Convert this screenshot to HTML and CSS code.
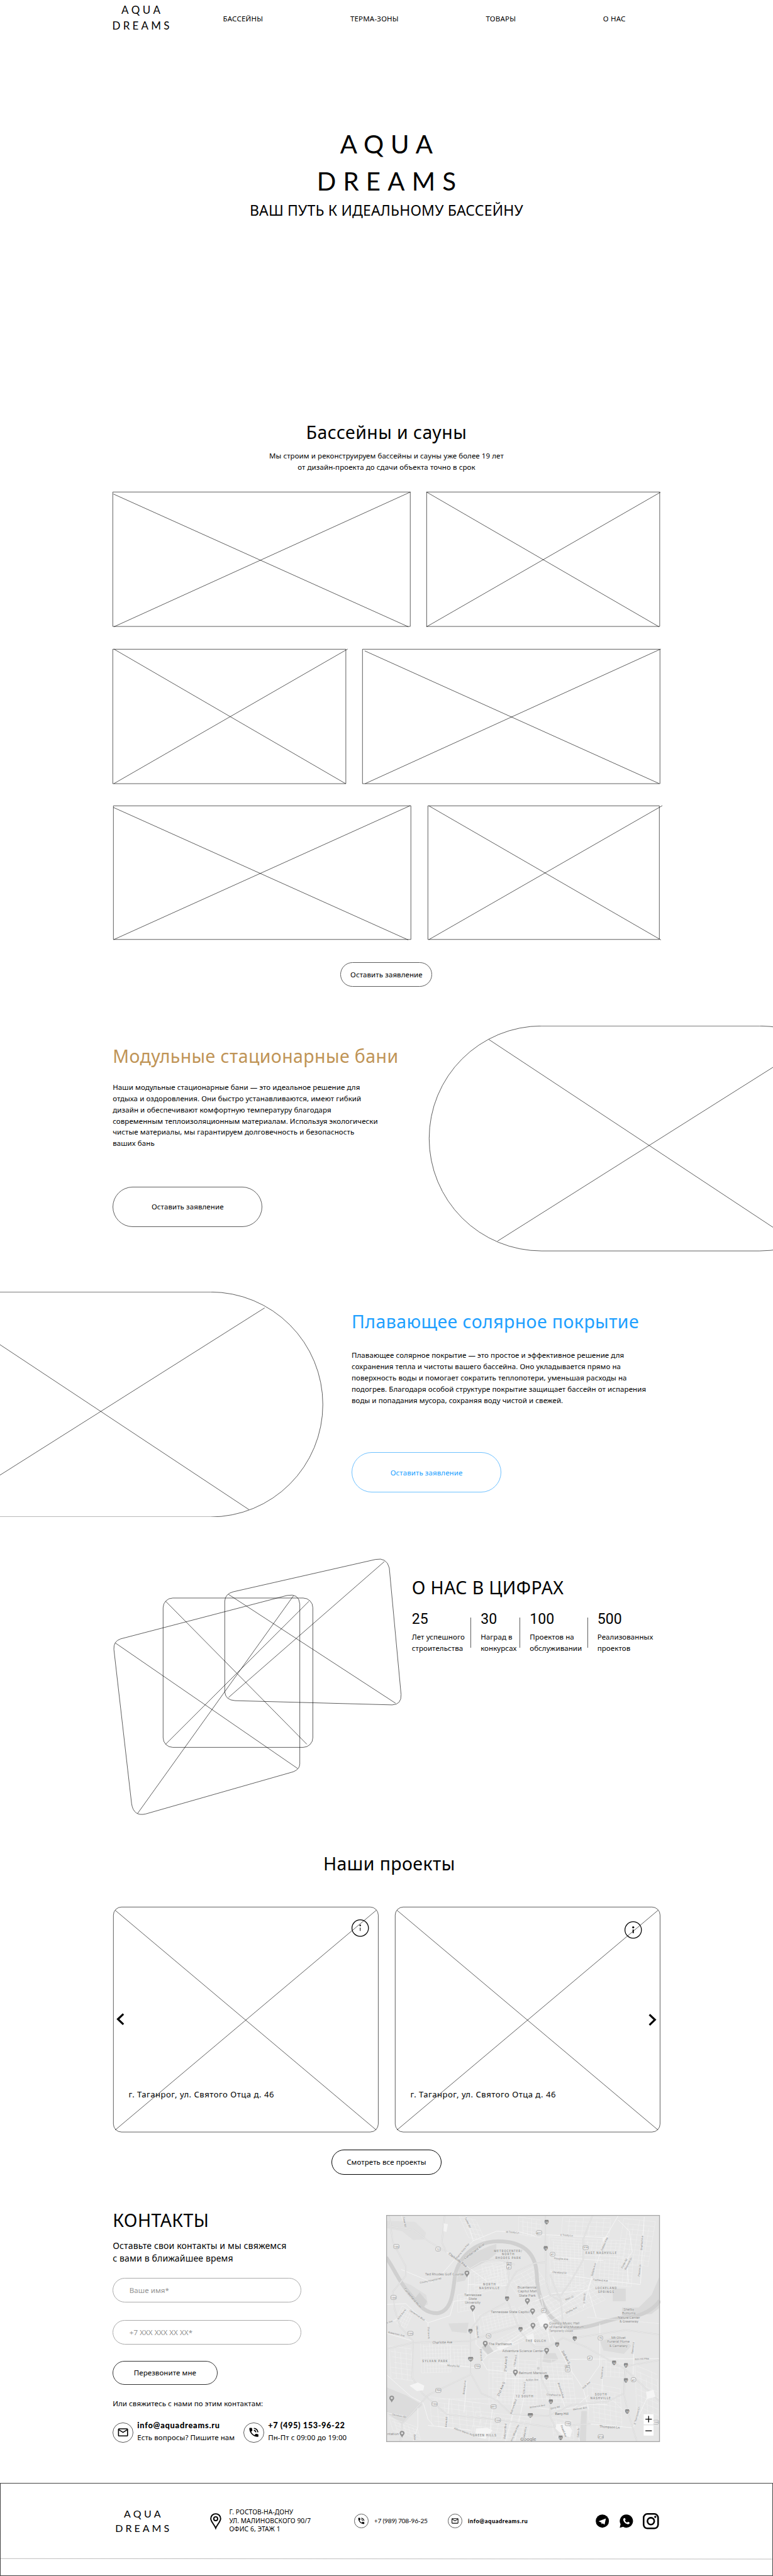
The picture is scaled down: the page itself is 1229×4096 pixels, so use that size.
FILE: index.html
```html
<!DOCTYPE html>
<html lang="ru">
<head>
<meta charset="utf-8">
<title>Aqua Dreams</title>
<link rel="stylesheet" href="styles.css">
</head>
<body>
<svg class="sprite" aria-hidden="true">
  <symbol id="i-mail" viewBox="0 0 24 24"><path d="M22 6c0-1.100-.9-2-2-2H4c-1.100 0-2 .9-2 2v12c0 1.100.9 2 2 2h16c1.100 0 2-.9 2-2V6zm-2 0l-8 5-8-5h16zm0 12H4V8l8 5 8-5v10z"/></symbol>
  <symbol id="i-call" viewBox="0 0 24 24"><path d="M20 15.500c-1.250 0-2.450-.2-3.570-.57-.35-.11-.74-.03-1.020.24l-2.200 2.200c-2.830-1.440-5.150-3.750-6.590-6.580l2.200-2.210c.28-.27.36-.66.25-1.010C8.700 6.450 8.500 5.250 8.500 4c0-.55-.45-1-1-1H4c-.55 0-1 .45-1 1 0 9.390 7.610 17 17 17 .55 0 1-.45 1-1v-3.500c0-.55-.45-1-1-1zM19 12h2c0-4.970-4.030-9-9-9v2c3.870 0 7 3.130 7 7zm-4 0h2c0-2.760-2.240-5-5-5v2c1.660 0 3 1.340 3 3z"/></symbol>
</svg>

<header class="header">
  <a class="logo logo--header"><span class="logo__a">AQUA</span><span class="logo__b">DREAMS</span></a>
  <nav class="nav"><a>БАССЕЙНЫ</a><a>ТЕРМА-ЗОНЫ</a><a>ТОВАРЫ</a><a>О НАС</a></nav>
</header>

<section class="hero">
  <h1 class="logo logo--hero"><span class="logo__a">AQUA</span><span class="logo__b">DREAMS</span></h1>
  <p class="hero__sub">ВАШ ПУТЬ К ИДЕАЛЬНОМУ БАССЕЙНУ</p>
</section>

<section class="pools">
  <h2 class="title">Бассейны и сауны</h2>
  <p class="pools__text">Мы строим и реконструируем бассейны и сауны уже более 19 лет<br>от дизайн-проекта до сдачи объекта точно в срок</p>
  <div class="gallery">
    <div class="gallery__row">
      <svg class="frame frame--wide" viewBox="0 0 740 335"><path d="M.5.5h739v334H.5zM2 5.500L735 335.500M740 .5L3 335.500"/></svg>
      <svg class="frame frame--narrow" viewBox="0 0 580 335"><path d="M.5.5h579v334H.5zM0 .5L578 335.500M581.500 1L0 335.500"/></svg>
    </div>
    <div class="gallery__row">
      <svg class="frame frame--narrow" viewBox="0 0 580 335"><path d="M.5.5h579v334H.5zM3 0L579 334.500M584 0L3 334.500"/></svg>
      <svg class="frame frame--wide" viewBox="0 0 740 335"><path d="M.5.5h739v334H.5zM6 4.500L737 334M741.500 0L7 334.500"/></svg>
    </div>
    <div class="gallery__row gallery__row--last">
      <svg class="frame frame--wide" viewBox="0 0 740 335"><path d="M.5.5h739v332H.5zM.5 4.500L733 333.700M738 0L1 333"/></svg>
      <svg class="frame frame--narrow" viewBox="0 0 580 335"><path d="M.5.5h575v332H.5zM2.700.4L579.500 333.700M583 0L2.700 333"/></svg>
    </div>
  </div>
  <a class="btn btn--small">Оставить заявление</a>
</section>

<section class="feature feature--sauna">
  <div class="feature__text">
    <h2 class="title title--gold">Модульные стационарные бани</h2>
    <p>Наши модульные стационарные бани — это идеальное решение для<br>отдыха и оздоровления. Они быстро устанавливаются, имеют гибкий<br>дизайн и обеспечивают комфортную температуру благодаря<br>современным теплоизоляционным материалам. Используя экологически<br>чистые материалы, мы гарантируем долговечность и безопасность<br>ваших бань</p>
    <a class="btn btn--big">Оставить заявление</a>
  </div>
  <svg class="pill" viewBox="0 0 855 560"><rect x=".5" y=".5" width="1100" height="559" rx="279.500"/><path d="M148.500 34L855 501M170.500 535L855 103"/></svg>
</section>

<section class="feature feature--cover">
  <svg class="pill" viewBox="0 0 803 560"><rect x="-298" y=".5" width="1100" height="559" rx="279.500"/><path d="M657.500 40L0 455.500M618.400 541.200L0 131.400"/></svg>
  <div class="feature__text">
    <h2 class="title title--blue">Плавающее солярное покрытие</h2>
    <p>Плавающее солярное покрытие — это простое и эффективное решение для<br>сохранения тепла и чистоты вашего бассейна. Оно укладывается прямо на<br>поверхность воды и помогает сократить теплопотери, уменьшая расходы на<br>подогрев. Благодаря особой структуре покрытие защищает бассейн от испарения<br>воды и попадания мусора, сохраняя воду чистой и свежей.</p>
    <a class="btn btn--big btn--blue">Оставить заявление</a>
  </div>
</section>

<section class="about">
  <svg class="about__art" viewBox="280 3869 720 645">
    <rect x="405.500" y="3970.500" width="372" height="371" rx="24"/>
    <path d="M411.700 3978.400L762.600 4333.800M768 3978.400L411.700 4333.800"/>
    <path d="M558.700 3978.400Q559.500 3960 579.800 3955L933.400 3874.600Q961 3869 967.400 3895.800L996.700 4210.300Q998 4235 974.700 4236L584.400 4225.500Q560 4224 558.700 4203.400Z"/>
    <path d="M567.900 3961.400L983 4231.900M955.400 3879.700L567.900 4217.700"/>
    <path d="M283.200 4097.800Q282 4078 299.700 4072.100L713 3964.200Q743 3958 745.100 3985.300V4382.500Q745 4396 728.600 4402.300L362.100 4507Q332 4514 327.200 4481.200Z"/>
    <path d="M286.800 4082.200L739.600 4394M729.500 3964.600L341.900 4506"/>
  </svg>
  <div class="about__text">
    <h2 class="title">О НАС В ЦИФРАХ</h2>
    <div class="stats">
      <div class="stat"><b>25</b><span>Лет успешного<br>строительства</span></div>
      <div class="stat"><b>30</b><span>Наград в<br>конкурсах</span></div>
      <div class="stat"><b>100</b><span>Проектов на<br>обслуживании</span></div>
      <div class="stat"><b>500</b><span>Реализованных<br>проектов</span></div>
    </div>
  </div>
</section>

<section class="projects">
  <h2 class="title">Наши проекты</h2>
  <div class="cards">
    <article class="card">
      <svg class="card__frame" viewBox="0 0 659 560"><rect x=".5" y=".5" width="658" height="559" rx="20"/><path d="M5 8.600L653.400 554.400M653.400 8.600L5 554.400"/></svg>
      <svg class="card__info" viewBox="0 0 46 46"><circle cx="23" cy="23" r="20.500"/><circle class="dot" cx="23" cy="16.500" r="2"/><path d="M23 22v8" stroke-width="1.600"/></svg>
      <svg class="card__arrow card__arrow--prev" viewBox="0 0 20 30"><path d="M17.500 2L4 15l13.500 13"/></svg>
      <p class="card__place">г. Таганрог, ул. Святого Отца д. 46</p>
    </article>
    <article class="card">
      <svg class="card__frame" viewBox="0 0 659 560"><rect x=".5" y=".5" width="658" height="559" rx="20"/><path d="M5 8.600L653.400 554.400M653.400 8.600L5 554.400"/></svg>
      <svg class="card__info card__info--second" viewBox="0 0 46 46"><circle cx="23" cy="23" r="20.500"/><circle class="dot" cx="23" cy="16.500" r="2.600"/><path d="M23 22v9" stroke-width="3"/></svg>
      <svg class="card__arrow card__arrow--next" viewBox="0 0 20 30"><path d="M2.500 2L16 15 2.500 28"/></svg>
      <p class="card__place">г. Таганрог, ул. Святого Отца д. 46</p>
    </article>
  </div>
  <a class="btn btn--all">Смотреть все проекты</a>
</section>

<section class="contacts">
  <div class="contacts__form">
    <h2 class="title">КОНТАКТЫ</h2>
    <p class="contacts__lead">Оставьте свои контакты и мы свяжемся<br>с вами в ближайшее время</p>
    <div class="field">Ваше имя*</div>
    <div class="field">+7 XXX XXX XX XX*</div>
    <a class="btn btn--call">Перезвоните мне</a>
    <p class="contacts__or">Или свяжитесь с нами по этим контактам:</p>
    <div class="reach">
      <div class="reach__item"><span class="round"><svg><use href="#i-mail"/></svg></span><div><b class="reach__mail">info@aquadreams.ru</b><span>Есть вопросы? Пишите нам</span></div></div>
      <div class="reach__item"><span class="round"><svg><use href="#i-call"/></svg></span><div><b>+7 (495) 153-96-22</b><span>Пн-Пт с 09:00 до 19:00</span></div></div>
    </div>
  </div>
  <svg class="map" id="map" viewBox="0 0 680 564"></svg>
</section>

<footer class="footer">
  <div class="footer__main">
    <a class="logo logo--footer"><span class="logo__a">AQUA</span><span class="logo__b">DREAMS</span></a>
    <svg class="footer__pin" viewBox="0 0 28 40"><path d="M14 37.500C11 29 1.800 21 1.800 13.500a12.200 11.800 0 0 1 24.400 0C26.200 21 17 29 14 37.500z"/><circle cx="14" cy="14" r="4.800"/></svg>
    <p class="footer__address">Г. РОСТОВ-НА-ДОНУ<br>УЛ. МАЛИНОВСКОГО 90/7<br>ОФИС 6, ЭТАЖ 1</p>
    <div class="footer__phone"><span class="round round--small"><svg><use href="#i-call"/></svg></span>+7 (989) 708-96-25</div>
    <div class="footer__mail"><span class="round round--small"><svg><use href="#i-mail"/></svg></span>info@aquadreams.ru</div>
    <div class="social">
      <svg class="social__round" viewBox="0 0 34 34"><circle cx="17" cy="17" r="16.700"/><path class="cut" d="M7.300 17.300L26 10.200 22.600 25.700 17.700 22.500 15.500 25 14.500 20.500z"/></svg>
      <svg class="social__round" viewBox="0 0 34 34"><path d="M17.300.3a16.700 16.700 0 1 1-8.200 31.200L.5 33.700 2.700 25.200A16.700 16.700 0 0 1 17.300.3z"/><path class="cut" d="M12.300 9c-1.800.6-3.300 2.300-3 4.600.9 5.700 6 10.700 11.700 11.300 2.300.2 4-1.300 4.600-3.200.2-.9-3.700-3.200-4.400-2.900l-2 2c-2.500-1-4.600-3-5.600-5.600l1.700-2c.4-.9-1.800-4.400-3-4.200z"/></svg>
      <svg class="social__insta" viewBox="0 0 40 40"><rect x="2" y="2" width="36" height="36" rx="9.500"/><circle cx="20" cy="20" r="8.500"/><circle class="dot" cx="31" cy="9.500" r="2.700"/></svg>
    </div>
  </div>
  <svg class="footer__line" viewBox="0 0 1920 3" preserveAspectRatio="none"><path d="M0 .5L1920 1.700"/></svg>
</footer>
<script src="map.js"></script>
</body>
</html>
```

FILE: styles.css
```css
/* 1rem = 10 design units */
html { font-size: 6.4px; }
* { box-sizing: border-box; }
body { margin: 0; width: 192rem; height: 640rem; display: flex; flex-direction: column; background: #fff; color: #000; font-family: "Noto Sans", "Open Sans", sans-serif; font-size: 1.8rem; letter-spacing: .012rem; overflow-x: hidden; }
h1, h2, p { margin: 0; font-weight: 400; }
svg { display: block; overflow: visible; flex: none; }
.sprite { position: absolute; width: 0; height: 0; }

.title { font-size: 4.45rem; line-height: 6rem; letter-spacing: .065rem; white-space: nowrap; }
.title--gold { color: #bf9456; }
.title--blue { color: #20a0ff; }

.logo { position: relative; display: flex; flex-direction: column; align-items: center; font-family: Lato, sans-serif; font-weight: 400; }
.logo__a { letter-spacing: .27em; margin-right: -.27em; }
.logo__b { letter-spacing: .28em; margin-right: -.28em; }
.logo--header { width: 15rem; font-size: 2.65rem; line-height: 3.9rem; }
.logo--hero { font-size: 6.28rem; line-height: 9.2rem; }
.logo--footer { width: 15rem; font-size: 2.5rem; line-height: 3.67rem; }
.logo--header .logo__b, .logo--footer .logo__b { letter-spacing: .25em; margin-right: -.25em; }

.btn { display: flex; align-items: center; justify-content: center; border: 1px solid #5c5c5c; border-radius: 5rem; white-space: nowrap; }
.btn--small { width: 22.8rem; height: 6.1rem; margin-top: 5.5rem; }
.btn--big { width: 37.2rem; height: 10rem; }
.btn--blue { color: #20a0ff; border-color: #6ec1ff; }
.btn--all { width: 27.300rem; height: 6.3rem; border-color: #000; margin-top: 4.3rem; }
.btn--call { width: 26rem; height: 6rem; margin-top: 3.95rem; border-color: #333; }

.header { height: 10rem; display: flex; padding: .65rem 36.600rem 0 27.5rem; flex: none; }
.nav { flex: 1; display: flex; justify-content: space-between; margin: 2.85rem 0 0 12.900rem; line-height: 2.4rem; letter-spacing: .03rem; }

.hero { height: 90rem; padding-top: 21.300rem; display: flex; flex-direction: column; align-items: center; flex: none; }
.hero__sub { font-size: 3.6rem; line-height: 5rem; margin-top: .05rem; letter-spacing: .025rem; }

.pools { height: 154.900rem; padding-top: 4.34rem; display: flex; flex-direction: column; align-items: center; flex: none; }
.pools__text { margin-top: 1.5rem; line-height: 2.8rem; text-align: center; }
.gallery { width: 136rem; margin-top: 4.76rem; display: flex; flex-direction: column; gap: 5.5rem; }
.gallery__row { display: flex; gap: 4rem; }
.gallery__row--last { margin-left: .2rem; height: 33.300rem; }
.frame { height: 33.500rem; fill: none; stroke: #000; stroke-width: 1; }
.frame--wide { width: 74rem; }
.frame--narrow { width: 58rem; }

.feature { height: 56rem; display: flex; flex: none; overflow: hidden; }
.feature__text { padding-top: 4.4rem; }
.feature__text p { line-height: 2.8rem; white-space: nowrap; }
.feature--sauna .feature__text { width: 106.500rem; padding-left: 28rem; }
.feature--sauna p { height: 16.800rem; margin: 3.42rem 0 9.300rem; }
.feature--sauna .pill { width: 85.500rem; }
.feature--cover { margin-top: 10rem; }
.feature--cover .pill { width: 80.300rem; }
.feature--cover .feature__text { padding-left: 7.05rem; }
.feature--cover p { height: 14rem; margin: 4rem 0 11.500rem; }
.pill { height: 56rem; fill: none; stroke: #000; }

.about { display: flex; margin-top: 10rem; padding-left: 28rem; height: 64.500rem; flex: none; }
.about__art { width: 72rem; height: 64.500rem; fill: none; stroke: #000; }
.about__text { padding: 4.5rem 0 0 2.3rem; }
.stats { display: flex; margin-top: 2.8rem; }
.stat { position: relative; display: flex; flex-direction: column; }
.stat:nth-child(1) { width: 17.100rem; }
.stat:nth-child(2) { width: 12.200rem; }
.stat:nth-child(3) { width: 16.800rem; }
.stat b { font: 400 3.6rem/4.4rem Roboto, sans-serif; }
.stat span { margin-top: .7rem; line-height: 2.8rem; white-space: nowrap; }
.stat + .stat::before { content: ""; position: absolute; left: -2.5rem; top: 1.7rem; width: 1px; height: 7.5rem; background: #5c5c5c; }

.projects { padding-top: 8.600rem; display: flex; flex-direction: column; align-items: center; flex: none; height: 97.200rem; }
.projects .title { padding-left: 1.4rem; }
.cards { display: flex; gap: 4.1rem; margin-top: 7.7rem; }
.card { position: relative; width: 65.900rem; height: 56rem; }
.card__frame { width: 65.900rem; height: 56rem; fill: none; stroke: #000; }
.card__info { position: absolute; left: 59.200rem; top: 3.1rem; width: 4.6rem; height: 4.6rem; fill: none; stroke: #000; stroke-width: 2; }
.card__info--second { left: 57rem; top: 3.45rem; }
.dot { fill: #000; stroke: none; }
.card__arrow { position: absolute; top: 26.500rem; width: 2rem; height: 3rem; fill: none; stroke: #000; stroke-width: 5; }
.card__arrow--prev { left: .9rem; }
.card__arrow--next { right: .9rem; top: 26.600rem; }
.card__place { position: absolute; left: 3.9rem; top: 45.300rem; font-size: 2.05rem; line-height: 2.8rem; letter-spacing: .075rem; white-space: nowrap; }

.contacts { display: flex; padding-left: 28rem; flex: none; height: 68.300rem; }
.contacts__form { width: 68rem; }
.contacts__lead { font-size: 2.2rem; line-height: 3.1rem; margin-top: 1.86rem; letter-spacing: .02rem; }
.field { width: 46.800rem; height: 6.150rem; margin-top: 4.36rem; padding-left: 4rem; display: flex; align-items: center; border: 1px solid #aaa; border-radius: 3.1rem; color: #929292; }
.contacts__lead + .field { margin-top: 3.25rem; }
.contacts__or { margin-top: 3.44rem; line-height: 2.4rem; }
.reach { display: flex; margin-top: 2.95rem; }
.reach__item { width: 32.500rem; display: flex; gap: 1rem; align-items: flex-start; white-space: nowrap; }
.reach__item b { display: block; font: 900 2rem/2.7rem Lato, sans-serif; letter-spacing: .045em; }
.reach__item div span { display: block; line-height: 2.600rem; margin-top: .3rem; }
.reach__item .reach__mail { letter-spacing: .06em; }
.round { flex: none; width: 5.1rem; height: 5.1rem; margin-top: .5rem; border: 1px solid #5c5c5c; border-radius: 50%; display: flex; align-items: center; justify-content: center; }
.round svg { width: 3rem; height: 3rem; }
.round--small { width: 3.6rem; height: 3.6rem; margin: 0; }
.round--small svg { width: 2rem; height: 2rem; }
.map { width: 68rem; height: 56.400rem; margin-top: 1.7rem; overflow: hidden; font-family: Roboto, sans-serif; letter-spacing: 0; }

.footer { flex: none; height: 23.100rem; border: 1px solid #444; }
.footer__main { height: 18.500rem; padding-left: 27.700rem; display: flex; align-items: center; white-space: nowrap; }
.footer__pin { width: 2.8rem; height: 4rem; margin-left: 9.3rem; fill: none; stroke: #000; stroke-width: 3; }
.footer__address { width: 27rem; margin-left: 2rem; font-size: 1.6rem; line-height: 2.1rem; }
.footer__phone, .footer__mail { display: flex; align-items: center; gap: 1.4rem; font-family: Lato, sans-serif; font-size: 1.6rem; }
.footer__phone { width: 23.300rem; margin-left: 4rem; letter-spacing: -.025em; }
.footer__mail { width: 36.700rem; font-weight: 900; font-size: 1.45rem; letter-spacing: .06em; }
.social { display: flex; align-items: center; }
.social__round { width: 3.34rem; height: 3.34rem; margin-right: 2.55rem; }
.social__insta { width: 4rem; height: 4rem; fill: none; stroke: #000; stroke-width: 4; }
.cut { fill: #fff; }
.footer__line { width: 100%; height: .3rem; fill: none; stroke: #999; }
```

FILE: map.js
```javascript
// City map: terrain and roads are in sheet units, labels are projected with px()/py().
const NS = 'http://www.w3.org/2000/svg';
const map = document.getElementById('map');
const SX = 0.4592, SY = 0.3954;
const px = x => (x - 44) * SX, py = y => (y - 58) * SY;
function add(tag, attrs, text) {
  const e = document.createElementNS(NS, tag);
  for (const k in attrs) e.setAttribute(k, attrs[k]);
  if (text) e.textContent = text;
  map.appendChild(e);
  return e;
}
function project(d) {
  let i = 0;
  return d.replace(/-?\d+(\.\d+)?/g, n => (i++ % 2 ? py(+n) : px(+n)).toFixed(1));
}
function line(d, color, w) {
  add('path', { d: project(d), fill: 'none', stroke: color, 'stroke-width': w, 'stroke-linejoin': 'round' });
}
function area(d, color) { add('path', { d: project(d), fill: color }); }
// Street grid over the parallelogram o, o+u, o+v
function grid(ox, oy, ux, uy, vx, vy, nu, nv) {
  let d = '';
  for (let i = 0; i <= nu; i++) {
    const t = i / nu, s = (i % 3) * 0.08;
    d += `M${ox + ux * t + vx * s} ${oy + uy * t + vy * s}L${ox + ux * t + vx} ${oy + uy * t + vy}`;
  }
  for (let i = 0; i <= nv; i++) {
    const t = i / nv, s = (i % 4) * 0.06;
    d += `M${ox + vx * t + ux * s} ${oy + vy * t + uy * s}L${ox + vx * t + ux} ${oy + vy * t + uy}`;
  }
  line(d, '#f1f1f1', 0.9);
}

add('rect', { width: 680, height: 564, fill: '#e6e6e6' });
area('M44 95L200 100 260 170 250 210 190 215 130 160 44 140Z', '#e0e0e0');
area('M470 320L600 255 640 240 640 300 590 345 500 400 470 470 425 480 440 380Z', '#dadada');
area('M120 470L180 500 260 560 270 620 235 635 160 560Z', '#dedede');
area('M1410 640L1480 560 1524 440 1524 640 1480 680 1320 700 1320 640Z', '#dadada');
area('M1270 520L1340 520 1340 600 1270 600Z', '#dadada');
area('M44 1140L150 1190 240 1250 130 1370 44 1300Z', '#dcdcdc');
area('M1200 850L1300 820 1370 880 1330 930 1220 910Z', '#dcdcdc');
area('M560 890L590 860 625 915 595 935Z', '#d3d3d3');
area('M380 740L490 735 480 800 400 790Z', '#dcdcdc');
area('M900 925L960 925 975 965 930 990 890 980Z', '#dadada');
area('M1100 1290L1130 1290 1125 1480 1090 1480Z', '#dadada');
area('M200 580L225 545 265 600 250 635Z', '#d3d3d3');

grid(500, 420, 190, -70, 0, 150, 9, 8);
grid(560, 370, 130, -20, 30, 130, 7, 6);
grid(925, 195, 180, 15, 10, 310, 8, 18);
grid(1110, 210, 230, 10, -10, 100, 9, 5);
grid(1180, 310, 200, 20, -10, 180, 8, 8);
grid(1000, 70, 260, 10, -10, 110, 7, 4);
grid(1330, 80, 170, 20, -40, 280, 6, 9);
grid(900, 600, 240, -130, 90, 120, 10, 6);
grid(540, 690, 200, -60, 20, 110, 10, 6);
grid(600, 870, 320, -190, 50, 60, 14, 4);
grid(760, 640, 150, -70, 120, 190, 7, 9);
grid(230, 860, 160, -5, 5, 190, 10, 8);
grid(130, 630, 60, 40, -40, 100, 5, 5);
grid(390, 880, 100, 0, 5, 130, 5, 6);
grid(600, 960, 260, 15, 0, 280, 12, 12);
grid(860, 960, 180, 10, 30, 270, 7, 11);
grid(530, 1290, 300, 40, -30, 160, 9, 7);
grid(700, 470, 150, -90, 60, 100, 6, 5);
grid(280, 1200, 270, 40, 10, 180, 7, 6);
grid(940, 1330, 110, 20, 10, 120, 5, 5);
grid(1130, 1110, 180, 40, 10, 240, 6, 8);
grid(60, 1330, 150, 60, 20, 80, 6, 4);
grid(760, 70, 120, 20, 0, 110, 5, 4);
grid(1390, 1000, 120, 60, 10, 330, 4, 9);
grid(430, 560, 90, -20, 0, 110, 5, 4);
grid(60, 880, 120, 20, 10, 200, 4, 6);
grid(1210, 950, 120, 10, 0, 120, 5, 4);
grid(440, 70, 90, 20, 50, 130, 4, 4);

line('M44 325C90 400 110 470 165 545C220 620 250 675 320 675C400 665 405 540 415 450C430 330 520 225 650 223C790 225 850 300 858 420C860 560 900 720 1030 765C1150 780 1230 710 1340 700C1430 700 1500 640 1524 595', '#d0d0d0', 9.5);

const local = [
  'M125 60L145 120', 'M475 60L515 220 420 330 330 450 290 480 125 400', 'M515 220L640 160 770 165 850 190',
  'M850 180L1060 190 1230 200 1300 60', 'M1300 90L1360 160 1375 290 1345 340 1355 480', 'M930 320L1220 345',
  'M930 410L1050 440 1165 460 1420 495', 'M1230 210L1170 400 1135 520', 'M1440 70L1420 490', 'M1155 460L1110 640',
  'M370 290L440 345 510 405 590 475', 'M490 430L485 580', 'M485 495L700 500', 'M44 620L150 615 190 660 270 735 390 690 410 600 480 590',
  'M270 735L270 830', 'M44 740L110 710 160 650', 'M44 800L190 850', 'M515 660L530 770 530 870 590 940 560 980',
  'M330 990L540 1020', 'M620 920L760 860', 'M700 950L690 1110 640 1220', 'M745 900L740 1160 720 1300', 'M800 1100L790 1200 740 1480',
  'M590 940L650 900 900 700 1140 520', 'M700 880L1060 640', 'M560 970L590 1030 745 1050 740 960', 'M690 1085L900 1090 1050 1085',
  'M945 820L1030 1010 1110 1150 1140 1280', 'M970 1120L1010 1260', 'M830 1265L940 1280 1060 1270 1140 1190', 'M1060 1280L1130 1250 1240 1250',
  'M1040 965L1524 960', 'M1200 740L1200 1000 1110 1150', 'M1215 1010L1210 1240', 'M1385 850L1380 1060', 'M44 1300L140 1320', 'M1130 1370L1380 1395 1470 1170',
  'M480 1100L465 1300', 'M385 1210L375 1390', 'M270 1380L500 1410', 'M215 1270L215 1390 190 1480', 'M245 1240L270 1340 300 1380', 'M620 1260L600 1480',
  'M44 1060L180 1200 245 1240', 'M1075 1380L1090 1480', 'M730 1300L690 1480', 'M850 600L950 550 1140 530', 'M1140 540L1180 700', 'M880 560L930 860'
];
local.forEach(d => line(d, '#f8f8f8', 1.3));
line('M300 1215L1120 1210M760 870L760 1180M1130 700L1524 740M430 1220L620 1250M1240 1190L1340 1300', '#f3f3f3', 1);

const highways = [
  'M44 125L190 150 270 220 370 290', 'M360 60L345 230 370 290', 'M60 60L80 230 150 380 150 440 80 540 90 650 120 760 190 850 185 1080 240 1180 370 1310 640 1345 930 1390 1150 1370',
  'M44 900L190 860 495 850 620 800 780 750', 'M905 60L905 200 910 480 930 560 990 600 1000 750 1070 830 1340 780 1524 810', 'M1160 60L1110 210 1110 340 1040 480 990 560 930 560',
  'M700 340L710 480 690 570 730 680 770 790 850 890 920 890 1000 830 1130 890 1340 1030 1524 1230', 'M490 400L560 350 640 335 740 370', 'M690 520L750 410 850 360 905 355',
  'M500 850L500 1050 560 1180 640 1220 720 1310 920 1320 1050 1250 1240 1230 1330 1180 1335 1010 1524 970', 'M500 850L500 780 560 690 690 610', 'M880 890L885 1090 930 1200 930 1320 990 1480',
  'M120 1480L130 1370 270 1190 500 1060', 'M1340 1030L1330 1180 1350 1290 1400 1480', 'M990 590L970 550 930 430'
];
highways.forEach(d => { line(d, '#d6d6d6', 3.2); line(d, '#e9e9e9', 1.6); });

area('M170 1130L215 1110 250 1130 245 1160 210 1165Z', '#f5f5f5');
area('M530 1400L590 1395 620 1410 580 1465 525 1450Z', '#f5f5f5');
area('M965 1370L1025 1370 1050 1410 1040 1455 1000 1440 960 1400Z', '#f5f5f5');
area('M1450 1170L1490 1155 1500 1200 1455 1215Z', '#f5f5f5');
area('M860 700L900 670 930 740 880 760Z', '#f5f5f5');
area('M800 820L840 800 850 870 815 850Z', '#f3f3f3');
area('M355 110L378 115 370 165 355 160Z', '#f3f3f3');
area('M1215 200L1245 190 1240 225 1215 225Z', '#f3f3f3');
area('M640 890L720 850 730 870 660 910Z', '#f3f3f3');

// Labels: text, left, right, baseline
const poi = [
  ['Ted Rhodes Golf Course', 254, 464, 438], ['Tennessee', 466, 560, 566], ['State', 490, 535, 590], ['University', 470, 554, 615],
  ['Bicentennial', 754, 860, 522], ['Capitol Mall', 756, 859, 546], ['State Park', 762, 853, 571], ['Tennessee State Capitol', 610, 820, 674],
  ['Country Music Hall', 926, 1090, 747], ['of Fame and Museum', 926, 1114, 771], ['Shelby', 1328, 1385, 659], ['Bottoms', 1320, 1394, 684],
  ['Nature Center', 1297, 1417, 709], ['& Greenway', 1306, 1408, 734], ['Mt Olivet', 1262, 1339, 837], ['Funeral Home', 1240, 1361, 862],
  ['& Cemetery', 1251, 1350, 887], ['The Parthenon', 598, 724, 878], ['Adventure Science Center', 672, 895, 920], ['Belmont Mansion', 761, 913, 1058], ['ntation', 50, 112, 1443]
];
const halo = { stroke: '#ececec', 'stroke-width': 1.4, 'paint-order': 'stroke' };
function label(t, x0, x1, y, size, fill, extra) {
  add('text', Object.assign({ x: px(x0), y: py(y), 'font-size': size, fill, textLength: (x1 - x0) * SX, lengthAdjust: 'spacingAndGlyphs' }, halo, extra || {}), t);
}
poi.forEach(p => label(...p, 9.6, '#8b8b8b'));
label('Temporarily closed', 926, 1055, 792, 7.6, '#999');
label('Berry Hill', 958, 1030, 1315, 9, '#707070');
label('Google', 770, 856, 1475, 11.5, '#8f8f8f', { 'font-weight': 500 });
[
  ['METROCENTER/', 627, 779, 290], ['NORTH', 670, 737, 311], ['RHODES PARK', 635, 772, 333], ['NORTH', 568, 636, 502], ['NASHVILLE', 547, 656, 524],
  ['EAST NASHVILLE', 1123, 1290, 303], ['LOCKELAND', 1176, 1291, 526], ['SPRINGS', 1190, 1276, 548], ['THE GULCH', 798, 908, 857], ['SYLVAN PARK', 239, 376, 981],
  ['12 SOUTH', 745, 839, 1205], ['SOUTH', 1173, 1237, 1193], ['NASHVILLE', 1149, 1258, 1215], ['GREEN HILLS', 512, 639, 1450]
].forEach(([t, a, b, y]) => add('text', Object.assign({ x: px(a), y: py(y), 'font-size': 7.4, fill: '#8d8d8d', 'font-weight': 500, textLength: (b - a) * SX, lengthAdjust: 'spacing' }, halo), t));

// Street names: text, centre x, centre y, angle, size
[
  ['W Trinity Ln', 727, 167, 4], ['E Trinity Ln', 1020, 186, 4], ['Douglas Ave', 990, 333, 4], ['Cleveland St', 981, 420, 5], ['Eastland Ave', 1203, 468, 5],
  ['Buena Vista Pike', 461, 282, -50], ['Clarksville Pike', 428, 341, 37, 8.2], ['County Hospital Rd', 285, 470, -12], ['Cumberland River', 525, 285, -37, 8], ['Cumberland River', 183, 578, 50, 8],
  ['Tucker Rd', 481, 103, 64], ['Creek Rd', 139, 97, 80], ['Gallatin Pike', 1229, 237, -66], ['Gallatin Ave', 1170, 398, -74], ['Stratford Ave', 1432, 229, -86], ['Porter Rd', 1336, 360, -62],
  ['Riverside Dr', 1358, 361, -62], ['Preston Dr', 1419, 402, -84], ['Main St', 1037, 580, -25], ['S 10th St', 1121, 577, -86], ['Shelby Ave', 1048, 656, -28], ['Centennial Blvd', 209, 687, 34],
  ['63rd Ave N', 132, 680, -52], ['e Ave', 64, 730, -18], ['Robertson Ave', 98, 806, 12], ['51st Ave N', 269, 793, 89], ['28th Ave N', 533, 787, 84], ['31st Ave N', 553, 932, 87], ['Charlotte Ave', 348, 860, -1, 8.2],
  ['21st Ave S', 697, 990, -86, 8.2], ['21st Ave S', 671, 1150, -66, 8.2], ['17th Ave S', 747, 970, -82], ['12th Ave S', 796, 1141, -86], ['Murphy Rd', 407, 1006, 5], ['2nd Ave S', 1011, 950, 62, 8.2],
  ['Acklen Ave', 833, 1094, -2], ['Craighead St', 949, 1188, 4], ['Bransford Ave', 985, 1157, 72], ['Bowling Ave', 472, 1137, -84], ['Belmont Blvd', 737, 1259, -70], ['Kirkwood Ave', 863, 1260, -9],
  ['Berry Rd', 959, 1269, -13], ['Melrose Ave', 1093, 1274, -9], ['Foster Ave', 1216, 1044, -84], ['Polk Ave', 1130, 1126, -44], ['Elm Hill Pike', 1428, 963, -4], ['Spence Ln', 1383, 888, -84],
  ['E Thompson Ln', 1405, 1315, -76], ['Thompson Ln', 1252, 1392, 4, 8.2], ['Davidson Rd', 113, 1320, 12], ['Estes Rd', 374, 1354, -86], ['Abbott Martin Rd', 459, 1419, 20], ['Belmont Blvd', 692, 1411, -86],
  ['anny White Pike', 744, 1425, -66, 6.4], ['Lealand Ln', 798, 1423, -80], ['Powell Ave', 1000, 1413, 68], ['Sidco Dr', 1088, 1421, -86], ['Belle', 194, 1450, 84]
].forEach(([t, x, y, a, s]) => add('text', Object.assign({ transform: `translate(${px(x).toFixed(1)} ${(py(y) + 2).toFixed(1)}) rotate(${a})`, 'text-anchor': 'middle', 'font-size': s || 6.4, fill: s > 7 ? '#7c7c7c' : '#8a8a8a' }, halo), t));

// Route shields
[
  ['155', 99, 256], ['12', 325, 272], ['431', 871, 169], ['31E', 1123, 263], ['41', 944, 305], ['41', 708, 386], ['155', 84, 576], ['41', 896, 658], ['155', 175, 802], ['70', 598, 818], ['70', 1203, 831],
  ['70S', 538, 1009], ['41', 1146, 957], ['31', 1026, 1031], ['41', 1382, 1093], ['70S', 326, 1160], ['155', 306, 1245], ['431', 625, 1262], ['155', 648, 1347], ['155', 1027, 1369], ['41A', 1205, 1451], ['155', 1503, 1360]
].forEach(([t, x, y]) => {
  const w = t.length > 2 ? 13.500 : 11.500;
  add('rect', { x: px(x) - w / 2, y: py(y) - 5, width: w, height: 10, rx: 3, fill: '#f7f7f7', stroke: '#8e8e8e', 'stroke-width': 1 });
  add('text', { x: px(x), y: py(y) + 2.500, 'text-anchor': 'middle', 'font-size': 6.800, fill: '#6c6c6c' }, t);
});
[['ALT', 709, 364], ['ALT', 1025, 1010]].forEach(([t, x, y]) => {
  add('rect', { x: px(x) - 5.500, y: py(y) - 3, width: 11, height: 6, fill: '#f7f7f7', stroke: '#8e8e8e', 'stroke-width': .8 });
  add('text', { x: px(x), y: py(y) + 2.200, 'text-anchor': 'middle', 'font-size': 5.500, fill: '#6c6c6c' }, t);
});
[
  ['24', 912, 103], ['24', 907, 268], ['65', 698, 584], ['40', 771, 776], ['40', 500, 788], ['24', 1064, 835], ['40', 969, 872], ['440', 501, 964], ['24', 1277, 987], ['40', 1341, 1003],
  ['65', 911, 1077], ['24', 1341, 1097], ['65', 935, 1231], ['24', 1348, 1293], ['440', 824, 1317], ['65', 988, 1458]
].forEach(([t, x, y]) => {
  const w = t.length > 2 ? 6.500 : 5.200, X = px(x), Y = py(y);
  add('path', { d: `M${X - w + 1} ${Y - 5.500}H${X + w - 1}L${X + w} ${Y - 2}Q${X + w} ${Y + 3} ${X} ${Y + 6}Q${X - w} ${Y + 3} ${X - w} ${Y - 2}Z`, fill: '#858585' });
  add('text', { x: X, y: Y + 3, 'text-anchor': 'middle', 'font-size': 6.500, fill: '#eee' }, t);
});

// Pins
[[481, 424], [512, 641], [808, 597], [836, 661], [838, 752], [907, 756], [580, 865], [912, 909], [743, 1046], [74, 1210], [130, 1431]].forEach(([x, y]) => {
  const X = px(x), Y = py(y);
  add('path', { d: `M${X} ${Y + 10.500}C${X - 2} ${Y + 5} ${X - 6} ${Y + 3} ${X - 6} ${Y - .5}A6 6 0 0 1 ${X + 6} ${Y - .5}C${X + 6} ${Y + 3} ${X + 2} ${Y + 5} ${X} ${Y + 10.500}Z`, fill: '#919191' });
  add('rect', { x: X - 2.500, y: Y - 3, width: 5, height: 4.500, rx: 1, fill: '#e2e2e2' });
});
add('circle', { cx: px(867), cy: py(1021), r: 3.600, fill: '#cfcfcf' });

// Zoom control and border
add('rect', { x: 639.700, y: 495, width: 24.500, height: 53, fill: '#fff' });
add('path', { d: 'M639.700 521.500h24.500', stroke: '#bbb' });
add('path', { d: 'M644 507.300h16M652 499.300v16M644 536.100h16', stroke: '#000', 'stroke-width': 2 });
add('rect', { x: 1, y: 1, width: 678, height: 562, fill: 'none', stroke: '#a6a6a6', 'stroke-width': 2 });
```
